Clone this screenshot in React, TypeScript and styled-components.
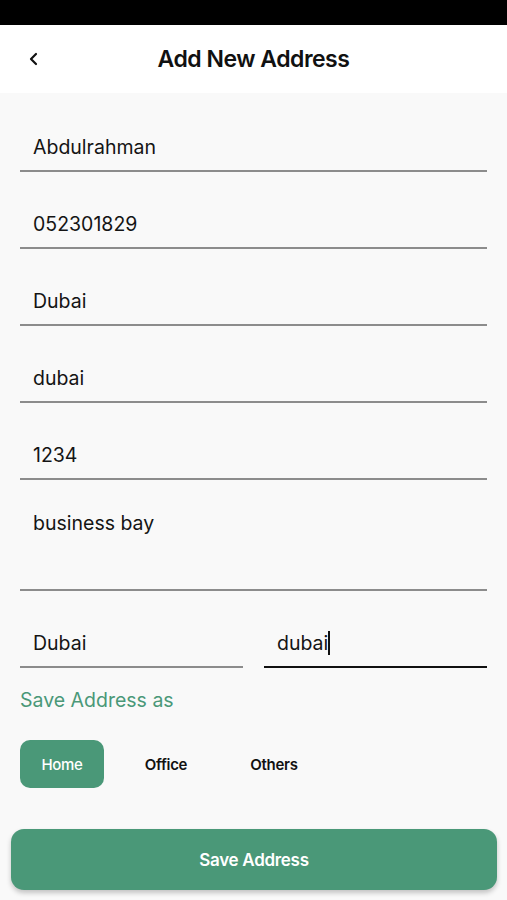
import styled, { createGlobalStyle } from "styled-components";

const GlobalStyle = createGlobalStyle`
  html, body {
    margin: 0;
    padding: 0;
    background: #f9f9f9;
    font-family: Inter, "Noto Sans", sans-serif;
  }
  * { box-sizing: border-box; }
`;

const GREEN = "#4a9878";

const Screen = styled.div`
  width: 507px;
  height: 900px;
  background: #f9f9f9;
  display: flex;
  flex-direction: column;
  overflow: hidden;
`;

const StatusBar = styled.div`
  height: 25px;
  background: #000;
`;

const Header = styled.header`
  height: 68px;
  background: #fff;
  display: grid;
  grid-template-columns: 68px 1fr 68px;
  align-items: center;
`;

const BackButton = styled.button`
  border: 0;
  background: none;
  padding: 0;
  display: flex;
  justify-content: center;
  align-items: center;
  height: 40px;
  cursor: pointer;
`;

const Title = styled.h1`
  margin: 0;
  text-align: center;
  font-size: 23px;
  font-weight: 600;
  color: #111;
  letter-spacing: -0.5px;
`;

const Form = styled.div`
  padding: 2px 20px 0;
  display: flex;
  flex-direction: column;
`;

const Field = styled.div<{ $tall?: boolean; $active?: boolean }>`
  height: ${({ $tall }) => ($tall ? "111px" : "77px")};
  display: flex;
  align-items: ${({ $tall }) => ($tall ? "flex-start" : "flex-end")};
  padding: ${({ $tall }) => ($tall ? "31px 13px 0" : "0 13px 11px")};
  border-bottom: 2px solid ${({ $active }) => ($active ? "#111" : "#8c8c8c")};
  font-size: 19.5px;
  line-height: 24px;
  color: #141414;
`;

const SplitRow = styled.div`
  display: grid;
  grid-template-columns: 1fr 1fr;
  column-gap: 21px;
`;

const Caret = styled.span`
  display: inline-block;
  width: 2px;
  height: 24px;
  background: #111;
  vertical-align: -5px;
`;

const SectionLabel = styled.div`
  margin-top: 20px;
  font-size: 19.5px;
  color: ${GREEN};
`;

const Chips = styled.div`
  display: flex;
  margin-top: 28px;
  align-items: center;
`;

const Chip = styled.button<{ $selected?: boolean }>`
  border: 0;
  height: 48px;
  width: ${({ $selected }) => ($selected ? "84px" : "auto")};
  padding: 0;
  border-radius: 10px;
  background: ${({ $selected }) => ($selected ? GREEN : "transparent")};
  color: ${({ $selected }) => ($selected ? "#fff" : "#111")};
  font-family: inherit;
  font-size: 15px;
  font-weight: ${({ $selected }) => ($selected ? 500 : 600)};
  letter-spacing: -0.3px;
  cursor: pointer;
`;

const ChipSlot = styled.div<{ $w: number }>`
  width: ${({ $w }) => $w}px;
  display: flex;
  justify-content: center;
`;

const Footer = styled.div`
  padding: 41px 10px 0 11px;
`;

const SaveButton = styled.button`
  width: 100%;
  height: 61px;
  border: 0;
  border-radius: 13px;
  background: ${GREEN};
  color: #fff;
  font-family: inherit;
  font-size: 17px;
  font-weight: 600;
  letter-spacing: -0.3px;
  box-shadow: 0 3px 5px rgba(0, 0, 0, 0.22);
  cursor: pointer;
`;

export default function App() {
  return (
    <Screen>
      <GlobalStyle />
      <StatusBar />
      <Header>
        <BackButton aria-label="Back">
          <svg width="14" height="16" viewBox="0 0 14 16" fill="none">
            <path d="M9 3 L4 8 L9 13" stroke="#111" strokeWidth="2.2" strokeLinecap="round" strokeLinejoin="round" />
          </svg>
        </BackButton>
        <Title>Add New Address</Title>
        <div />
      </Header>
      <Form>
        <Field>Abdulrahman</Field>
        <Field>052301829</Field>
        <Field>Dubai</Field>
        <Field>dubai</Field>
        <Field>1234</Field>
        <Field $tall>business bay</Field>
        <SplitRow>
          <Field>Dubai</Field>
          <Field $active>
            <span>
              dubai
              <Caret />
            </span>
          </Field>
        </SplitRow>
        <SectionLabel>Save Address as</SectionLabel>
        <Chips>
          <Chip $selected>Home</Chip>
          <ChipSlot $w={124}>
            <Chip>Office</Chip>
          </ChipSlot>
          <ChipSlot $w={92}>
            <Chip>Others</Chip>
          </ChipSlot>
        </Chips>
      </Form>
      <Footer>
        <SaveButton>Save Address</SaveButton>
      </Footer>
    </Screen>
  );
}
